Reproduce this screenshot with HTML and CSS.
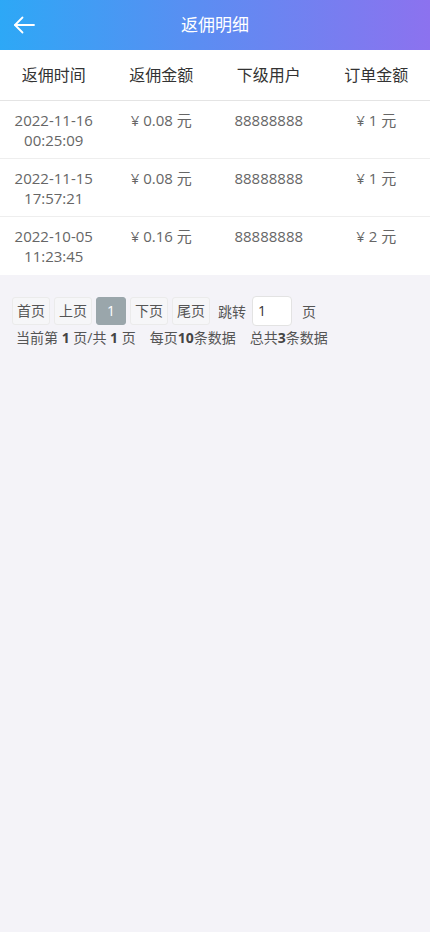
FILE: index.html
```html
<!DOCTYPE html>
<html lang="zh">
<head>
<meta charset="utf-8">
<meta name="viewport" content="width=device-width, initial-scale=1">
<title>返佣明细</title>
<link rel="stylesheet" href="styles.css">
</head>
<body>
<header class="topbar">
  <span class="back">
    <svg width="22" height="18" viewBox="0 0 22 18" fill="none" stroke="#fff" stroke-width="1.8" stroke-linecap="round" stroke-linejoin="round"><path d="M21 9H2"/><path d="M9.5 1.5L2 9l7.5 7.5"/></svg>
  </span>
  <h1 class="title">返佣明细</h1>
</header>
<div class="table">
  <div class="row head">
    <div class="cell">返佣时间</div>
    <div class="cell">返佣金额</div>
    <div class="cell">下级用户</div>
    <div class="cell">订单金额</div>
  </div>
  <div class="row">
    <div class="cell">2022-11-16<br>00:25:09</div>
    <div class="cell">¥ 0.08 元</div>
    <div class="cell">88888888</div>
    <div class="cell">¥ 1 元</div>
  </div>
  <div class="row">
    <div class="cell">2022-11-15<br>17:57:21</div>
    <div class="cell">¥ 0.08 元</div>
    <div class="cell">88888888</div>
    <div class="cell">¥ 1 元</div>
  </div>
  <div class="row">
    <div class="cell">2022-10-05<br>11:23:45</div>
    <div class="cell">¥ 0.16 元</div>
    <div class="cell">88888888</div>
    <div class="cell">¥ 2 元</div>
  </div>
</div>
<div class="pager">
  <div class="pager-row">
    <span class="pbtn">首页</span>
    <span class="pbtn">上页</span>
    <span class="pbtn active">1</span>
    <span class="pbtn">下页</span>
    <span class="pbtn">尾页</span>
    <span class="plabel">跳转</span>
    <span class="pinput">1</span>
    <span class="plabel">页</span>
  </div>
  <div class="pager-info">
    <span>当前第 <b>1</b> 页/共 <b>1</b> 页</span>
    <span>每页<b>10</b>条数据</span>
    <span>总共<b>3</b>条数据</span>
  </div>
</div>
</body>
</html>
```
FILE: styles.css
```css
* { box-sizing: border-box; }
html, body { margin: 0; padding: 0; }
body {
  background: #f4f3f8;
  font-family: "Open Sans", "Noto Sans CJK SC", "Liberation Sans", Arial, sans-serif;
  min-height: 932px;
}
.topbar {
  height: 50px;
  display: flex;
  align-items: center;
  justify-content: center;
  position: relative;
  background: linear-gradient(90deg, #2da8f6 0%, #5a8ef2 45%, #8c72ef 100%);
}
.back {
  position: absolute;
  left: 13px;
  top: 16px;
  display: flex;
}
.title {
  margin: 0;
  color: #fff;
  font-size: 17px;
  font-weight: normal;
  line-height: 50px;
}
.table {
  background: #fff;
}
.row {
  display: grid;
  grid-template-columns: repeat(4, 1fr);
  border-bottom: 1px solid #eeeeee;
  min-height: 58px;
  padding: 9px 0 8px;
  color: #666;
  font-size: 15px;
  line-height: 20px;
}
.row:last-child { border-bottom: none; }
.row.head {
  height: 51px;
  min-height: 51px;
  padding: 0;
  align-items: center;
  color: #333;
  font-size: 16px;
  border-bottom: 1px solid #e4e4e4;
}
.cell {
  text-align: center;
}
.pager {
  padding: 21px 12px 0;
}
.pager-row {
  display: flex;
  align-items: center;
  gap: 4px;
  font-size: 14px;
  color: #555;
}
.pbtn {
  height: 28px;
  line-height: 26px;
  padding: 0 4px;
  border: 1px solid #ebebeb;
  border-radius: 3px;
  background: #f6f6f8;
}
.pbtn.active {
  background: #9aa6ab;
  border-color: #9aa6ab;
  color: #fff;
  width: 30px;
  text-align: center;
}
.plabel {
  padding: 0 2px 0 4px;
}
.pinput {
  width: 40px;
  height: 30px;
  line-height: 28px;
  padding-left: 5px;
  border: 1px solid #e3e3e3;
  border-radius: 4px;
  background: #fff;
  color: #333;
  margin-right: 2px;
}
.pager-info {
  display: flex;
  gap: 14px;
  padding: 2px 0 0 4px;
  font-size: 14px;
  color: #555;
  line-height: 20px;
}
.pager-info b { color: #444; }
```
